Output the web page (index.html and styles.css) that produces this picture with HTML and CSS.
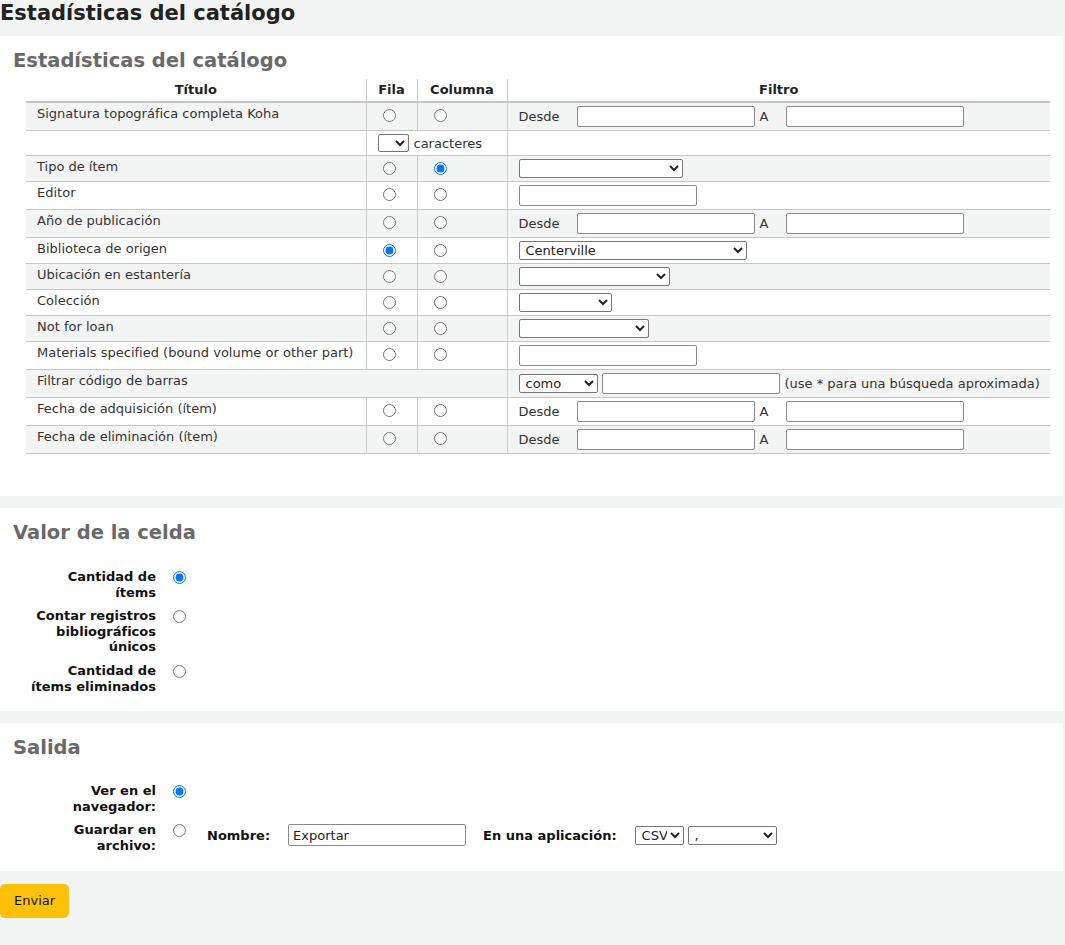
FILE: index.html
```html
<!DOCTYPE html>
<html lang="es">
<head>
<meta charset="utf-8">
<title>Estadísticas del catálogo</title>
<link rel="stylesheet" href="styles.css">
</head>
<body>
<h1 class="page-title">Estadísticas del catálogo</h1>

<section class="panel panel-table">
  <h2 class="panel-title">Estadísticas del catálogo</h2>
  <table class="stats">
    <colgroup>
      <col class="c-title">
      <col class="c-row">
      <col class="c-col">
      <col class="c-filter">
    </colgroup>
    <thead>
      <tr>
        <th>Título</th>
        <th class="bl">Fila</th>
        <th class="bl">Columna</th>
        <th class="bl">Filtro</th>
      </tr>
    </thead>
    <tbody>
      <tr class="alt">
        <td>Signatura topográfica completa Koha</td>
        <td class="bl"><input type="radio" name="Line"></td>
        <td class="bl"><input type="radio" name="Column"></td>
        <td class="bl"><div class="range"><span class="lbl-from">Desde</span><input type="text" class="txt"><span class="lbl-to">A</span><input type="text" class="txt"></div></td>
      </tr>
      <tr>
        <td></td>
        <td class="bl" colspan="2"><div class="chars"><select class="sel sel-chars"></select><span>caracteres</span></div></td>
        <td class="bl"></td>
      </tr>
      <tr class="alt">
        <td>Tipo de ítem</td>
        <td class="bl"><input type="radio" name="Line"></td>
        <td class="bl"><input type="radio" name="Column" checked></td>
        <td class="bl"><select class="sel w164"><option></option></select></td>
      </tr>
      <tr>
        <td>Editor</td>
        <td class="bl"><input type="radio" name="Line"></td>
        <td class="bl"><input type="radio" name="Column"></td>
        <td class="bl"><input type="text" class="txt"></td>
      </tr>
      <tr class="alt">
        <td>Año de publicación</td>
        <td class="bl"><input type="radio" name="Line"></td>
        <td class="bl"><input type="radio" name="Column"></td>
        <td class="bl"><div class="range"><span class="lbl-from">Desde</span><input type="text" class="txt"><span class="lbl-to">A</span><input type="text" class="txt"></div></td>
      </tr>
      <tr>
        <td>Biblioteca de origen</td>
        <td class="bl"><input type="radio" name="Line" checked></td>
        <td class="bl"><input type="radio" name="Column"></td>
        <td class="bl"><select class="sel w228"><option>Centerville</option></select></td>
      </tr>
      <tr class="alt">
        <td>Ubicación en estantería</td>
        <td class="bl"><input type="radio" name="Line"></td>
        <td class="bl"><input type="radio" name="Column"></td>
        <td class="bl"><select class="sel w151"><option></option></select></td>
      </tr>
      <tr>
        <td>Colección</td>
        <td class="bl"><input type="radio" name="Line"></td>
        <td class="bl"><input type="radio" name="Column"></td>
        <td class="bl"><select class="sel w93"><option></option></select></td>
      </tr>
      <tr class="alt">
        <td>Not for loan</td>
        <td class="bl"><input type="radio" name="Line"></td>
        <td class="bl"><input type="radio" name="Column"></td>
        <td class="bl"><select class="sel w130"><option></option></select></td>
      </tr>
      <tr>
        <td>Materials specified (bound volume or other part)</td>
        <td class="bl"><input type="radio" name="Line"></td>
        <td class="bl"><input type="radio" name="Column"></td>
        <td class="bl"><input type="text" class="txt"></td>
      </tr>
      <tr class="alt">
        <td colspan="3">Filtrar código de barras</td>
        <td class="bl"><div class="range"><select class="sel w79"><option>como</option></select><input type="text" class="txt ml4"><span class="hint">(use * para una búsqueda aproximada)</span></div></td>
      </tr>
      <tr>
        <td>Fecha de adquisición (ítem)</td>
        <td class="bl"><input type="radio" name="Line"></td>
        <td class="bl"><input type="radio" name="Column"></td>
        <td class="bl"><div class="range"><span class="lbl-from">Desde</span><input type="text" class="txt"><span class="lbl-to">A</span><input type="text" class="txt"></div></td>
      </tr>
      <tr class="alt">
        <td>Fecha de eliminación (ítem)</td>
        <td class="bl"><input type="radio" name="Line"></td>
        <td class="bl"><input type="radio" name="Column"></td>
        <td class="bl"><div class="range"><span class="lbl-from">Desde</span><input type="text" class="txt"><span class="lbl-to">A</span><input type="text" class="txt"></div></td>
      </tr>
    </tbody>
  </table>
</section>

<section class="panel">
  <h2 class="panel-title">Valor de la celda</h2>
  <ol class="rows">
    <li class="row">
      <label class="row-label">Cantidad de ítems</label>
      <input type="radio" name="Cellvalue" checked>
    </li>
    <li class="row">
      <label class="row-label">Contar registros bibliográficos únicos</label>
      <input type="radio" name="Cellvalue">
    </li>
    <li class="row">
      <label class="row-label">Cantidad de ítems eliminados</label>
      <input type="radio" name="Cellvalue">
    </li>
  </ol>
</section>

<section class="panel">
  <h2 class="panel-title">Salida</h2>
  <ol class="rows rows-out">
    <li class="row">
      <label class="row-label">Ver en el navegador:</label>
      <input type="radio" name="output" checked>
    </li>
    <li class="row">
      <label class="row-label">Guardar en archivo:</label>
      <input type="radio" name="output">
      <div class="save">
        <label class="inline-label">Nombre:</label>
        <input type="text" class="txt" value="Exportar">
        <label class="inline-label app">En una aplicación:</label>
        <select class="sel w49"><option>CSV</option></select>
        <select class="sel w89 ml4"><option>,</option></select>
      </div>
    </li>
  </ol>
</section>

<div class="actions">
  <button type="button" class="btn-submit">Enviar</button>
</div>
</body>
</html>
```

FILE: styles.css
```css
html, body {
  margin: 0;
  padding: 0;
}

body {
  background: #f3f4f4;
  font-family: "DejaVu Sans", "Liberation Sans", sans-serif;
  font-size: 13px;
  color: #222;
}

.page-title {
  margin: 0;
  font-size: 21px;
  line-height: 26px;
  font-weight: bold;
  color: #222;
  padding: 0 0 10px 0;
}

.panel {
  background: #fff;
  margin: 0 2px 12px 0;
  padding: 13px 13px 9px 13px;
}

.panel-table {
  padding-bottom: 42px;
}

.panel-title {
  margin: 0;
  font-size: 19.5px;
  line-height: 24px;
  font-weight: bold;
  color: #696969;
}

/* table */
.stats {
  margin: 6px 0 0 13px;
  width: 1024px;
  border-collapse: collapse;
  table-layout: fixed;
}

.c-title { width: 340px; }
.c-row { width: 51px; }
.c-col { width: 90px; }
.c-filter { width: 543px; }

.stats th {
  font-weight: bold;
  color: #222;
  text-align: center;
  padding: 3px 11px 4px 11px;
  line-height: 15px;
  border-bottom: 2px solid #c6c6c6;
}

.stats td {
  vertical-align: top;
  text-align: left;
  padding: 3px 11px;
  line-height: 15px;
  color: #333;
  border-bottom: 1px solid #c6c6c6;
}

.stats .bl {
  border-left: 1px solid #cfcfcf;
}

.stats tr.alt td {
  background: #f3f4f4;
}

.stats input[type="radio"] {
  margin: 3px 3px 0 5px;
  vertical-align: top;
}

.range {
  display: flex;
  align-items: center;
}

.chars {
  display: flex;
  align-items: center;
  gap: 5px;
}

.lbl-from {
  width: 58px;
  flex: none;
}

.lbl-to {
  width: 26px;
  padding-left: 5px;
  flex: none;
}

.hint {
  margin-left: 5px;
  white-space: nowrap;
}

.txt {
  box-sizing: border-box;
  width: 178px;
  height: 21px;
  margin: 0;
  padding: 1px 4px;
  border: 1px solid #8a8a8a;
  border-radius: 2px;
  font-family: "DejaVu Sans", sans-serif;
  font-size: 13px;
  color: #222;
  background: #fff;
  flex: none;
  display: block;
}

.sel {
  box-sizing: border-box;
  height: 19px;
  margin: 0;
  padding: 0 0 0 2px;
  font-family: "DejaVu Sans", sans-serif;
  font-size: 13px;
  color: #222;
  background: #fff;
  border: 1px solid #767676;
  border-radius: 2px;
  flex: none;
  display: block;
}

.sel-chars { width: 31px; height: 18px; }
.w164 { width: 164px; }
.w228 { width: 228px; }
.w151 { width: 151px; }
.w93 { width: 93px; }
.w130 { width: 130px; }
.w79 { width: 79px; }
.w49 { width: 49px; }
.w89 { width: 89px; }
.ml4 { margin-left: 4px; }

/* fieldset rows */
.rows {
  list-style: none;
  margin: 24px 0 0 13px;
  padding: 0;
}

.rows-out {
  margin-top: 23px;
}

.row {
  display: flex;
  align-items: flex-start;
  padding-bottom: 8px;
}

.row-label {
  width: 130px;
  flex: none;
  text-align: right;
  font-weight: bold;
  color: #111;
  line-height: 15.6px;
  margin-right: 12px;
}

.row input[type="radio"] {
  margin: 2px 3px 0 5px;
  flex: none;
}

.save {
  display: flex;
  align-items: center;
  margin-left: 18px;
  margin-top: 2px;
}

.inline-label {
  font-weight: bold;
  color: #111;
  margin-right: 18px;
}

.inline-label.app {
  margin-left: 17px;
}

.save .txt {
  height: 22px;
}

/* actions */
.actions {
  padding: 1px 0 20px 0;
}

.btn-submit {
  background: #ffc107;
  border: none;
  border-radius: 5px;
  height: 34px;
  padding: 0 14px;
  font-family: "DejaVu Sans", sans-serif;
  font-size: 13px;
  color: #111;
  cursor: pointer;
}
```
